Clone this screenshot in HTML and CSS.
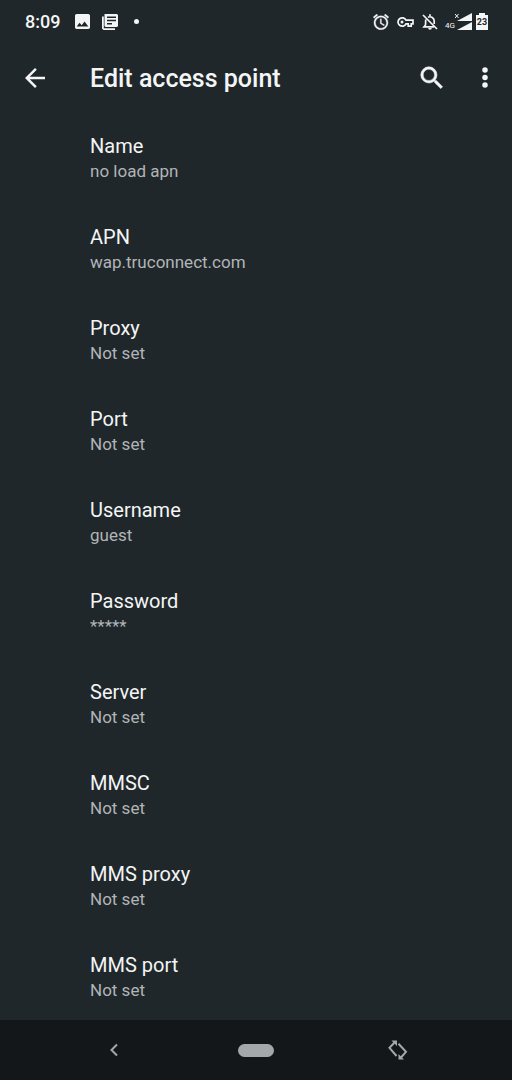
FILE: index.html
```html
<!DOCTYPE html>
<html lang="en">
<head>
<meta charset="utf-8">
<meta name="viewport" content="width=device-width, initial-scale=1">
<title>Edit access point</title>
<link rel="stylesheet" href="styles.css">
</head>
<body>
<div class="status">
  <div class="status-left">
    <span class="time">8:09</span>
    <svg class="photo" viewBox="3 3 18 18" aria-hidden="true"><path d="M21 19V5c0-1.100-.9-2-2-2H5c-1.100 0-2 .9-2 2v14c0 1.100.9 2 2 2h14c1.100 0 2-.9 2-2zM8.500 13.500l2.500 3 3.500-4.500 4.500 6H5l3.500-4.500z"/></svg>
    <svg class="news" viewBox="0 0 16 16" aria-hidden="true"><path fill-rule="evenodd" d="M2.500 0H15l1 1v11l-1 1H3.500l-1-1zM5 2.500V4h9V2.500zM5 5.700v1.500h9V5.700zM5 9v1.500h5V9z"/><path d="M0 2.500h1.800v11.700H13V16H1.500L0 14.500z"/></svg>
    <span class="dot"></span>
  </div>
  <div class="status-right">
    <svg class="alarm" viewBox="2 1.800 20 20.400" aria-hidden="true"><path class="bold" d="M22 5.720l-4.600-3.860-1.290 1.530 4.600 3.860L22 5.720zM7.880 3.390L6.600 1.860 2 5.710l1.290 1.530 4.590-3.850zM12.500 8H11v6l4.750 2.850.75-1.230-4-2.370V8zM12 4c-4.970 0-9 4.030-9 9s4.020 9 9 9a9 9 0 0 0 0-18zm0 16c-3.870 0-7-3.130-7-7s3.130-7 7-7 7 3.130 7 7-3.130 7-7 7z"/></svg>
    <svg class="key" viewBox="0 0 17 12" aria-hidden="true"><path class="line" d="M9 4.200A4.200 4.200 0 1 0 9 7.800h2.200v2.300h3V7.800H16V4.200z"/><circle cx="5" cy="6" r="1.500"/></svg>
    <svg class="bell" viewBox="0 0 16 18" aria-hidden="true"><path class="line" d="M1 2l14 14M3.800 6.500C3.500 8 3.700 10 3.500 12L2 13.800h10M6 4.200C9 2.800 12.200 5 12.200 8v3M8 1.200V3"/><path d="M6.200 15h3.600a1.800 1.800 0 0 1-3.600 0z"/></svg>
    <div class="signal">
      <span class="network">4G</span>
      <svg class="bars" viewBox="0 0 17 17" aria-hidden="true"><path d="M17 0v8H2zM17 9v8H2z"/><path class="cross" d="M0 1l3.500 4M3.500 1L0 5"/></svg>
    </div>
    <div class="battery">
      <svg viewBox="0 0 12 17" aria-hidden="true"><path d="M3 0h6v2h3v15H0V2h3z"/></svg>
      <span class="level">23</span>
    </div>
  </div>
</div>
<header class="bar">
  <button class="icon-button" aria-label="Back"><svg viewBox="0 0 24 24"><path d="M20 11H7.830l5.590-5.590L12 4l-8 8 8 8 1.410-1.410L7.830 13H20v-2z"/></svg></button>
  <h1 class="title">Edit access point</h1>
  <div class="actions">
    <button class="icon-button" aria-label="Search"><svg viewBox="0 0 24 24"><path class="bold" d="M15.500 14h-.79l-.28-.27A6.470 6.470 0 0 0 16 9.500 6.500 6.500 0 1 0 9.500 16c1.610 0 3.090-.59 4.230-1.570l.27.28v.79l5 4.990L20.490 19l-4.990-5zm-6 0C7.010 14 5 11.990 5 9.500S7.010 5 9.500 5 14 7.010 14 9.500 11.990 14 9.500 14z"/></svg></button>
    <button class="icon-button" aria-label="More options"><svg viewBox="0 0 24 24"><circle cx="12" cy="5.600" r="2.200"/><circle cx="12" cy="11.600" r="2.200"/><circle cx="12" cy="17.600" r="2.200"/></svg></button>
  </div>
</header>
<main class="list">
  <button class="row"><span class="label">Name</span><span class="value">no load apn</span></button>
  <button class="row"><span class="label">APN</span><span class="value">wap.truconnect.com</span></button>
  <button class="row"><span class="label">Proxy</span><span class="value">Not set</span></button>
  <button class="row"><span class="label">Port</span><span class="value">Not set</span></button>
  <button class="row"><span class="label">Username</span><span class="value">guest</span></button>
  <button class="row"><span class="label">Password</span><span class="value">*****</span></button>
  <button class="row"><span class="label">Server</span><span class="value">Not set</span></button>
  <button class="row"><span class="label">MMSC</span><span class="value">Not set</span></button>
  <button class="row"><span class="label">MMS proxy</span><span class="value">Not set</span></button>
  <button class="row"><span class="label">MMS port</span><span class="value">Not set</span></button>
</main>
<nav class="nav">
  <button class="nav-button" aria-label="Back"><svg viewBox="0 0 24 24"><path class="line thick" d="M15 6.500L9.500 12l5.500 5.500"/></svg></button>
  <button class="nav-button" aria-label="Home"><span class="pill"></span></button>
  <button class="nav-button" aria-label="Rotate screen"><svg viewBox="0 0 24 24"><path class="line thick" d="M10.500 18L3.500 9.800 8.500 4.500M12.500 5.800l7.500 8L15 19.500"/><path d="M5.500 2.500h5.500V8zM18 21.500h-5.500V16z"/></svg></button>
</nav>
</body>
</html>
```
FILE: styles.css
```css
* { box-sizing: border-box; }

body {
  display: flex;
  flex-direction: column;
  height: 100vh;
  margin: 0;
  background: #20272a;
  color: #f3f5f6;
  font-family: Roboto, "Liberation Sans", sans-serif;
}

button {
  padding: 0;
  border: 0;
  background: none;
  color: inherit;
  font: inherit;
}

svg {
  display: block;
  fill: currentColor;
}

.line {
  fill: none;
  stroke: currentColor;
  stroke-width: 1.7;
}

.thick { stroke-width: 2; }

.bold {
  stroke: currentColor;
  stroke-width: 0.4;
}

.status {
  display: flex;
  flex: none;
  align-items: center;
  justify-content: space-between;
  height: 43px;
  padding: 0 24px 0 25px;
}

.status-left,
.status-right {
  display: flex;
  align-items: center;
}

.time {
  margin-right: 15px;
  font-size: 18px;
  line-height: 22px;
  font-weight: 500;
}

.photo { width: 15px; height: 15px; margin-right: 12px; }
.news { width: 16px; height: 16px; margin-right: 16px; }

.dot {
  width: 5px;
  height: 5px;
  border-radius: 50%;
  background: currentColor;
}

.alarm { width: 16px; height: 16px; margin-right: 8px; }
.key { width: 17px; height: 12px; margin-right: 8px; }
.bell { width: 16px; height: 18px; margin-right: 7px; }

.signal {
  display: flex;
  align-items: flex-end;
  margin-right: 4px;
}

.network {
  font-size: 8px;
  line-height: 8px;
}

.bars { width: 17px; height: 17px; }

.cross {
  fill: none;
  stroke: currentColor;
}

.battery {
  display: grid;
  place-items: center;
}

.battery > * { grid-area: 1 / 1; }
.battery svg { width: 12px; height: 17px; }

.level {
  color: #20272a;
  font-size: 9px;
  font-weight: 700;
}

.bar {
  display: flex;
  flex: none;
  align-items: center;
  height: 70px;
  padding: 0 12px 0 20px;
}

.icon-button svg {
  width: 30px;
  height: 30px;
}

.title {
  flex: 1;
  margin: 0 0 0 40px;
  font-size: 25px;
  font-weight: 500;
}

.actions {
  display: flex;
  gap: 23px;
}

.list {
  display: flex;
  flex: 1;
  flex-direction: column;
  min-height: 0;
  overflow-y: auto;
  scrollbar-width: none;
}

.row {
  display: flex;
  flex: none;
  flex-direction: column;
  padding: 20px 24px 21px 90px;
  text-align: left;
}

.label {
  font-size: 20px;
  line-height: 26px;
}

.value {
  color: #b1b5b7;
  font-size: 17px;
  line-height: 24px;
}

.nav {
  display: flex;
  flex: none;
  align-items: center;
  justify-content: center;
  height: 60px;
  background: #131719;
  color: #a5a8aa;
}

.nav-button {
  display: flex;
  flex: 0 1 142px;
  align-items: center;
  justify-content: center;
}

.nav-button svg {
  width: 24px;
  height: 24px;
}

.pill {
  width: 36px;
  height: 13px;
  border-radius: 7px;
  background: currentColor;
}
```
